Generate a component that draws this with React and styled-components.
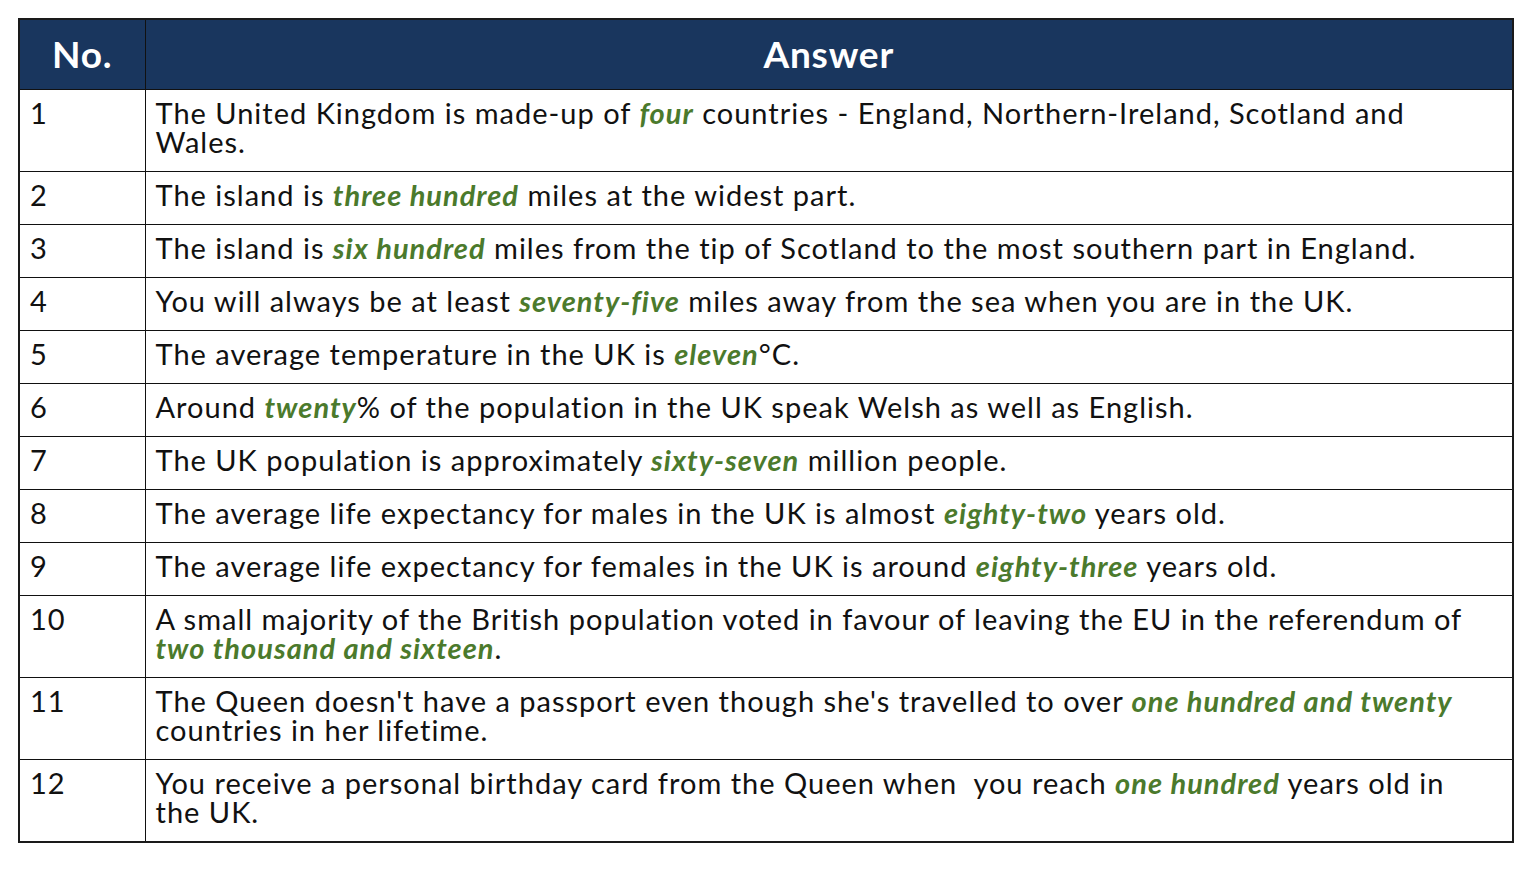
import React from "react";
import styled, { createGlobalStyle } from "styled-components";

const Global = createGlobalStyle`
  html, body { margin: 0; padding: 0; background: #fff; }
  body { font-family: "Lato", "Noto Sans", sans-serif; color: #111; }
`;

const Page = styled.div`
  padding: 18px 0 0 18px;
`;

const Table = styled.table`
  width: 1496px;
  border-collapse: collapse;
  table-layout: fixed;
  border: 2px solid #1a1a1a;
`;

const HeadCell = styled.th`
  background: #19365e;
  color: #fff;
  font-weight: 700;
  font-size: 37px;
  letter-spacing: 0.8px;
  height: 70px;
  padding: 0 0 2px;
  text-align: center;
  border: 1.5px solid #111;
  width: ${(p) => p.$w || "auto"};
  box-sizing: border-box;
`;

const Cell = styled.td`
  border: 1.5px solid #111;
  vertical-align: top;
  font-size: 29px;
  letter-spacing: 1px;
  line-height: 29px;
  padding: 8px 24px 15px 10px;
  text-align: left;
`;

const Hl = styled.b`
  color: #4b7a2c;
  font-weight: 700;
  font-style: italic;
`;

const rows = [
  ["1", <>The United Kingdom is made-up of <Hl>four</Hl> countries - England, Northern-Ireland, Scotland and Wales.</>],
  ["2", <>The island is <Hl>three hundred</Hl> miles at the widest part.</>],
  ["3", <>The island is <Hl>six hundred</Hl> miles from the tip of Scotland to the most southern part in England.</>],
  ["4", <>You will always be at least <Hl>seventy-five</Hl> miles away from the sea when you are in the UK.</>],
  ["5", <>The average temperature in the UK is <Hl>eleven</Hl>°C.</>],
  ["6", <>Around <Hl>twenty</Hl>% of the population in the UK speak Welsh as well as English.</>],
  ["7", <>The UK population is approximately <Hl>sixty-seven</Hl> million people.</>],
  ["8", <>The average life expectancy for males in the UK is almost <Hl>eighty-two</Hl> years old.</>],
  ["9", <>The average life expectancy for females in the UK is around <Hl>eighty-three</Hl> years old.</>],
  ["10", <>A small majority of the British population voted in favour of leaving the EU in the referendum of <Hl>two thousand and sixteen</Hl>.</>],
  ["11", <>The Queen doesn't have a passport even though she's travelled to over <Hl>one hundred and twenty</Hl> countries in her lifetime.</>],
  ["12", <>You receive a personal birthday card from the Queen when{"\u00a0"} you reach <Hl>one hundred</Hl> years old in the UK.</>],
];

export default function App() {
  return (
    <Page>
      <Global />
      <Table>
        <thead>
          <tr>
            <HeadCell $w="126px">No.</HeadCell>
            <HeadCell>Answer</HeadCell>
          </tr>
        </thead>
        <tbody>
          {rows.map(([n, t]) => (
            <tr key={n}>
              <Cell>{n}</Cell>
              <Cell>{t}</Cell>
            </tr>
          ))}
        </tbody>
      </Table>
    </Page>
  );
}
